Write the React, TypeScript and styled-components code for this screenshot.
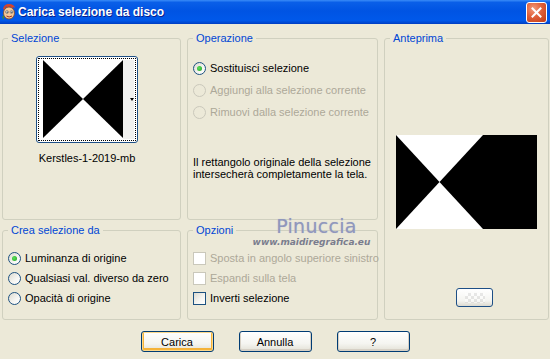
import React, { FC } from 'react';
import styled, { createGlobalStyle } from 'styled-components';

const GlobalStyle = createGlobalStyle`
  html, body {
    margin: 0;
    padding: 0;
    background: #ece9d8;
  }
  body {
    font-family: 'Liberation Sans', Arial, sans-serif;
    font-size: 11px;
    color: #000;
  }
`;

const Window = styled.div`
  position: relative;
  width: 550px;
  height: 359px;
  overflow: hidden;
  background: #ece9d8;
`;

const TitleBar = styled.div`
  display: flex;
  align-items: center;
  height: 24px;
  padding: 0 3px 0 1px;
  box-sizing: border-box;
  background: linear-gradient(
    #3a8cf8 0%,
    #0a5fe8 10%,
    #0054e3 45%,
    #0058ea 85%,
    #0048d0 95%,
    #003cc0 100%
  );
`;

const Title = styled.span`
  flex: 1;
  margin-left: 1px;
  color: #fff;
  font-family: 'Liberation Sans', Arial, sans-serif;
  font-weight: bold;
  font-size: 12px;
  text-shadow: 1px 1px 0 #0a1e8c;
`;

const CloseButton = styled.div`
  display: flex;
  align-items: center;
  justify-content: center;
  width: 19px;
  height: 19px;
  border: 1px solid #fff;
  border-radius: 3px;
  background: radial-gradient(circle at 35% 30%, #f39b7c 0%, #e0603a 45%, #c23a14 100%);
`;

const Client = styled.div`
  padding: 8px 0 0 2px;
`;

const Panels = styled.div`
  display: grid;
  grid-template-columns: 179px 191px 165px;
  grid-template-rows: 188px 96px;
  column-gap: 6px;
  row-gap: 4px;
`;

const Group = styled.fieldset<{ span?: boolean }>`
  margin: 0;
  padding: 0 5px;
  min-width: 0;
  border: 1px solid #d0d0bf;
  border-radius: 3px;
  box-sizing: border-box;
  display: flex;
  flex-direction: column;
  ${p => p.span && 'grid-row: 1 / span 2; grid-column: 3;'}
`;

const Legend = styled.legend`
  padding: 0 3px;
  margin-left: 0;
  line-height: 13px;
  color: #0046d5;
`;

const ThumbColumn = styled.div`
  display: flex;
  flex-direction: column;
  align-items: center;
  width: 102px;
  margin: 11px 0 0 28px;
`;

const ThumbButton = styled.div`
  display: flex;
  width: 102px;
  height: 87px;
  box-sizing: border-box;
  padding: 1px;
  border: 1px solid #1d4f86;
  border-radius: 3px;
  background: #fff;
`;

const FocusRing = styled.div`
  display: flex;
  flex: 1;
  padding: 1px 0 1px 4px;
  border: 1px dotted #000;
`;

const DropStrip = styled.div`
  display: flex;
  align-items: center;
  justify-content: flex-end;
  width: 11px;
  background: #f1f1ef;
`;

const DropArrow = styled.div`
  width: 0;
  height: 0;
  border-left: 2px solid transparent;
  border-right: 2px solid transparent;
  border-top: 3px solid #000;
`;

const Caption = styled.div`
  margin-top: 9px;
  line-height: 13px;
  white-space: nowrap;
`;

const OptionList = styled.div<{ top: number; rowHeight: number }>`
  display: flex;
  flex-direction: column;
  margin-top: ${p => p.top}px;
  & > * {
    height: ${p => p.rowHeight}px;
  }
`;

const OptionRow = styled.label<{ disabled?: boolean }>`
  display: flex;
  align-items: center;
  gap: 4px;
  white-space: nowrap;
  color: ${p => (p.disabled ? '#aca899' : '#000')};
`;

const RadioDot = styled.span<{ checked?: boolean; disabled?: boolean }>`
  position: relative;
  flex: none;
  width: 13px;
  height: 13px;
  box-sizing: border-box;
  border-radius: 50%;
  border: 1px solid ${p => (p.disabled ? '#cac8bb' : '#1c5180')};
  background: ${p =>
    p.disabled ? 'transparent' : 'linear-gradient(135deg, #dcdad0 0%, #f6f6f3 60%, #fff 100%)'};
  ${p =>
    p.checked &&
    `
    &::after {
      content: '';
      position: absolute;
      left: 3px;
      top: 3px;
      width: 5px;
      height: 5px;
      border-radius: 50%;
      background: radial-gradient(circle at 40% 40%, #5ce05c, #21a121);
    }
  `}
`;

const CheckBox = styled.span<{ disabled?: boolean }>`
  flex: none;
  width: 13px;
  height: 13px;
  box-sizing: border-box;
  border: 1px solid ${p => (p.disabled ? '#cac8bb' : '#1c5180')};
  background: ${p =>
    p.disabled ? '#fff' : 'linear-gradient(135deg, #dcdad0 0%, #f6f6f3 60%, #fff 100%)'};
`;

const Note = styled.p`
  margin: 33px 0 0 0;
  line-height: 12px;
`;

const PreviewColumn = styled.div`
  display: flex;
  flex-direction: column;
  align-items: center;
`;

const PreviewImage = styled.svg`
  margin-top: 90px;
  display: block;
`;

const SmallButton = styled.div`
  margin: 59px 0 0 16px;
  width: 37px;
  height: 19px;
  box-sizing: border-box;
  border: 1px solid #1d4f86;
  border-radius: 3px;
  background: linear-gradient(#fff 0%, #f4f4f0 70%, #dcdad0 100%);
  display: flex;
  align-items: center;
  justify-content: center;
`;

const Checker = styled.div`
  width: 20px;
  height: 10px;
  opacity: 0.45;
  background-image: conic-gradient(#cfcfcf 25%, #fff 0 50%, #cfcfcf 0 75%, #fff 0);
  background-size: 6px 6px;
`;

const ButtonRow = styled.div`
  display: flex;
  justify-content: center;
  gap: 25px;
  margin: 11px 0 0 -2px;
`;

const PushButton = styled.button<{ primary?: boolean }>`
  width: 73px;
  height: 21px;
  padding: 0;
  border: 1px solid #003c74;
  border-radius: 3px;
  font: inherit;
  color: #000;
  background: linear-gradient(#fff 0%, #f5f5f1 60%, #e3e1d6 100%);
  box-shadow: ${p =>
    p.primary
      ? 'inset 0 0 0 1px #fbd88c, inset 0 -1px 0 2px #f5b33a'
      : 'inset 0 -1px 0 1px #d6d0c5'};
`;

const Watermark = styled.div`
  position: absolute;
  left: 251px;
  top: 215px;
  width: 121px;
  display: flex;
  flex-direction: column;
  align-items: center;
  pointer-events: none;
`;

const WatermarkName = styled.span`
  margin-left: 10px;
  font-family: 'DejaVu Sans', sans-serif;
  font-size: 19px;
  letter-spacing: 0.3px;
  color: #9097bb;
  line-height: 22px;
  text-shadow: 0 0 1px #b9bdd6;
`;

const WatermarkSite = styled.span`
  font-family: 'DejaVu Sans', sans-serif;
  font-style: italic;
  font-weight: bold;
  font-size: 9px;
  letter-spacing: 0;
  color: #7a7d8e;
  line-height: 11px;
  white-space: nowrap;
`;

const TitleIcon: FC = () => (
  <svg width="16" height="18" viewBox="0 0 16 18">
    <path d="M2 6 Q3 1 8 1 Q13 1 14 5 L12 4 L11 6 L9 3 L7 6 L5 3 L4 7 Z" fill="#d8432a" />
    <ellipse cx="8" cy="10" rx="5.5" ry="6" fill="#f4c89a" stroke="#8a4a20" strokeWidth="0.8" />
    <circle cx="6" cy="9" r="1.4" fill="#fff" stroke="#333" strokeWidth="0.5" />
    <circle cx="10.5" cy="9" r="1.4" fill="#fff" stroke="#333" strokeWidth="0.5" />
    <circle cx="6.2" cy="9.2" r="0.6" fill="#222" />
    <circle cx="10.7" cy="9.2" r="0.6" fill="#222" />
    <path d="M5.5 13 Q8 15 11 13" stroke="#a0301e" strokeWidth="1" fill="none" />
    <path d="M1 14 L3 12 L3 17 Z" fill="#3c8a3c" />
  </svg>
);

const CloseIcon: FC = () => (
  <svg width="11" height="11" viewBox="0 0 11 11">
    <path d="M1.5 1.5 L9.5 9.5 M9.5 1.5 L1.5 9.5" stroke="#fff" strokeWidth="2" strokeLinecap="square" />
  </svg>
);

const HourGlass: FC<{ width: number; height: number }> = ({ width, height }) => (
  <svg width={width} height={height} viewBox={`0 0 ${width} ${height}`} style={{ display: 'block' }}>
    <rect width={width} height={height} fill="#000" />
    <polygon points={`0,0 ${width},0 ${width / 2},${height / 2}`} fill="#fff" />
    <polygon points={`0,${height} ${width},${height} ${width / 2},${height / 2}`} fill="#fff" />
  </svg>
);

const Radio: FC<{ label: string; checked?: boolean; disabled?: boolean }> = ({
  label,
  checked,
  disabled,
}) => (
  <OptionRow disabled={disabled}>
    <RadioDot checked={checked} disabled={disabled} />
    {label}
  </OptionRow>
);

const Check: FC<{ label: string; disabled?: boolean }> = ({ label, disabled }) => (
  <OptionRow disabled={disabled}>
    <CheckBox disabled={disabled} />
    {label}
  </OptionRow>
);

const App: FC = () => {
  return (
    <>
      <GlobalStyle />
      <Window>
        <TitleBar>
          <TitleIcon />
          <Title>Carica selezione da disco</Title>
          <CloseButton>
            <CloseIcon />
          </CloseButton>
        </TitleBar>
        <Client>
          <Panels>
            <Group>
              <Legend>Selezione</Legend>
              <ThumbColumn>
                <ThumbButton>
                  <FocusRing>
                    <HourGlass width={80} height={78} />
                    <DropStrip>
                      <DropArrow />
                    </DropStrip>
                  </FocusRing>
                </ThumbButton>
                <Caption>Kerstles-1-2019-mb</Caption>
              </ThumbColumn>
            </Group>

            <Group>
              <Legend>Operazione</Legend>
              <OptionList top={12} rowHeight={22}>
                <Radio label="Sostituisci selezione" checked />
                <Radio label="Aggiungi alla selezione corrente" disabled />
                <Radio label="Rimuovi dalla selezione corrente" disabled />
              </OptionList>
              <Note>
                Il rettangolo originale della selezione
                <br />
                intersecherà completamente la tela.
              </Note>
            </Group>

            <Group span>
              <Legend>Anteprima</Legend>
              <PreviewColumn>
                <PreviewImage width="141" height="94" viewBox="0 0 141 94">
                  <rect width="141" height="94" fill="#000" />
                  <polygon points="0,0 87,0 43.5,47" fill="#fff" />
                  <polygon points="0,94 87,94 43.5,47" fill="#fff" />
                </PreviewImage>
                <SmallButton>
                  <Checker />
                </SmallButton>
              </PreviewColumn>
            </Group>

            <Group>
              <Legend>Crea selezione da</Legend>
              <OptionList top={11} rowHeight={20}>
                <Radio label="Luminanza di origine" checked />
                <Radio label="Qualsiasi val. diverso da zero" />
                <Radio label="Opacità di origine" />
              </OptionList>
            </Group>

            <Group>
              <Legend>Opzioni</Legend>
              <OptionList top={11} rowHeight={20}>
                <Check label="Sposta in angolo superiore sinistro" disabled />
                <Check label="Espandi sulla tela" disabled />
                <Check label="Inverti selezione" />
              </OptionList>
            </Group>
          </Panels>

          <ButtonRow>
            <PushButton primary>Carica</PushButton>
            <PushButton>Annulla</PushButton>
            <PushButton>?</PushButton>
          </ButtonRow>
        </Client>

        <Watermark>
          <WatermarkName>Pinuccia</WatermarkName>
          <WatermarkSite>www.maidiregrafica.eu</WatermarkSite>
        </Watermark>
      </Window>
    </>
  );
};

export default App;
